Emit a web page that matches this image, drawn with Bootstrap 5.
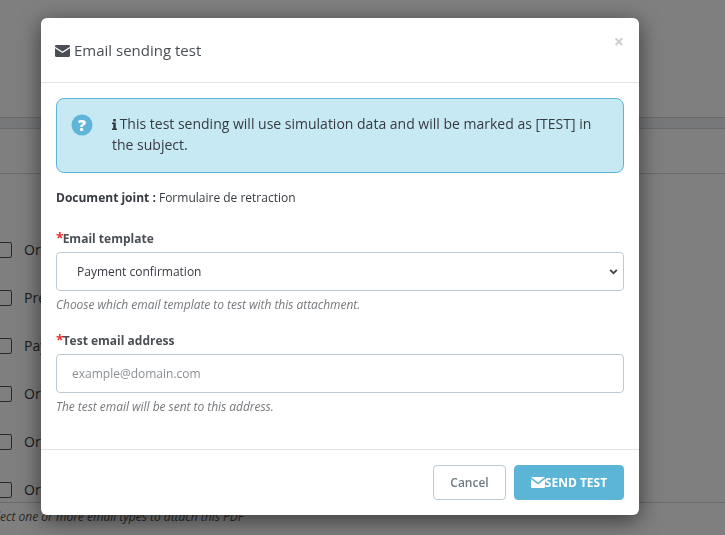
<!DOCTYPE html>
<html lang="en">
<head>
<meta charset="utf-8">
<title>Email sending test</title>
<link href="https://cdn.jsdelivr.net/npm/bootstrap@5.3.0/dist/css/bootstrap.min.css" rel="stylesheet">
<style>
html,body{height:535px;overflow:hidden}
body{font-family:"Open Sans",sans-serif;font-size:12px;color:#363a41;background:#fff}
.bg-page{height:535px;overflow:hidden;padding-top:117px}
.bg-band{height:12px;background:#ecf0f2;border-top:1px solid #d6d6d6;border-bottom:1px solid #d6d6d6}
.bg-strip{height:45px;border-bottom:1px solid #d6d6d6}
.bg-list{padding:68px 0 0 0;height:329px;border-bottom:1px solid #d6d6d6}
.bg-row{height:48px;display:flex;align-items:flex-start;gap:12px;font-size:14px;line-height:16px;margin-left:-4px;color:#363a41}
.bg-box{width:16px;height:16px;border:1px solid #555;border-radius:2px;flex:none;background:#fff}
.bg-hint{font-style:italic;font-size:12px;line-height:18px;padding-top:5px;margin-left:-15px;color:#555;white-space:nowrap}
.shade{position:fixed;inset:0;background:#000;opacity:.5;z-index:10}
.dlg{position:absolute;left:41px;top:18px;width:598px;height:497px;z-index:20;border:0;border-radius:6px;box-shadow:0 5px 22px rgba(0,0,0,.55);overflow:hidden;display:flex;flex-direction:column;background:#fff}
.dlg-head{height:65px;padding:0 14px;border-bottom:1px solid #e3e3e3;align-items:center;display:flex;position:relative;flex:none}
.dlg-title{font-size:15px;font-weight:400;color:#4a4f55;line-height:1;margin:1px 0 0;display:flex;align-items:center;gap:4px}
.dlg-x{position:absolute;right:15px;top:13px;font-size:18px;font-weight:700;color:#cdcdcd;background:none;border:0;padding:0;line-height:20px}
.dlg-body{padding:15px;flex:1;min-height:0}
.note{display:flex;background:#c7e9f3;border:1px solid #5eb5d7;border-radius:8px;height:75px;padding:14px 15px 0 14px;margin:0;color:#363a41;font-size:14px;line-height:21px}
.note-ico{width:41px;flex:none;padding-top:1px}
.note-ico svg{display:block}
.note-i{vertical-align:-1px;margin-right:-1px}
.doc{margin:16px 0 0;line-height:18px;height:18px}
.doc b{font-weight:700}
.fld-lab{font-size:12px;font-weight:700;color:#4a4f55;line-height:16px;margin:0 0 5px;display:block}
.fld-lab i{color:#e4322b;font-style:normal;font-size:14px;line-height:14px;margin-right:-1px}
.fld-a{margin-top:24px}
.fld-b{margin-top:20px}
.inp{height:39px;border:1px solid #bccbd3;border-radius:4px;font-size:12px;color:#363a41;font-family:inherit;box-shadow:none}
select.inp{padding:0 16px 0 20px;background-image:url("data:image/svg+xml,%3csvg xmlns='http://www.w3.org/2000/svg' viewBox='0 0 16 16'%3e%3cpath fill='none' stroke='%23444' stroke-width='3.2' d='M2 5l6 6 6-6'/%3e%3c/svg%3e");background-size:9px 9px;background-position:right 5px center}
input.inp{padding:0 15px}
input.inp::placeholder{color:#8a8f94;opacity:1}
.fld-help{font-style:italic;font-size:12px;color:#75797d;margin:5px 0 0;line-height:17px;letter-spacing:-.003em}
.dlg-foot{height:66px;flex:none;padding:0 15px;border-top:1px solid #e3e3e3;display:flex;justify-content:flex-end;align-items:center;gap:8px;margin:0}
.act{height:35px;border-radius:4px;font-size:12px;font-weight:600;display:flex;align-items:center;justify-content:center;padding:0;margin:0}
.act-cancel{width:73px;background:#fff;border:1px solid #bccbd3;color:#6c7a84}
.act-send{width:110px;background:#5cb5d6;border:1px solid #5cb5d6;color:#fff;font-weight:700}
</style>
</head>
<body>
<div class="bg-page">
  <div class="bg-band"></div>
  <div class="bg-strip"></div>
  <div class="bg-list">
    <div class="bg-row"><span class="bg-box"></span><span>Order</span></div>
    <div class="bg-row"><span class="bg-box"></span><span>Preparation</span></div>
    <div class="bg-row"><span class="bg-box"></span><span>Payment</span></div>
    <div class="bg-row"><span class="bg-box"></span><span>Order</span></div>
    <div class="bg-row"><span class="bg-box"></span><span>Order</span></div>
    <div class="bg-row"><span class="bg-box"></span><span>Order</span></div>
  </div>
  <div class="bg-hint">Select one or more email types to attach this PDF</div>
</div>
<div class="shade"></div>

<div class="dlg" role="dialog">
  <div class="dlg-head">
    <h5 class="dlg-title">
      <svg width="15" height="12" viewBox="0 0 14 11"><path fill="#4a4f55" d="M1 0h12a1 1 0 0 1 1 1v.6L7 6 0 1.6V1a1 1 0 0 1 1-1zM0 3l7 4.4L14 3v7a1 1 0 0 1-1 1H1a1 1 0 0 1-1-1z"/></svg>
      Email sending test</h5>
    <button type="button" class="dlg-x" aria-label="Close">×</button>
  </div>
  <div class="dlg-body">
    <div class="note">
      <div class="note-ico">
        <svg width="22" height="22" viewBox="0 0 22 22"><circle cx="11" cy="11" r="10.5" fill="#5eb5d7"/><text x="11" y="17" text-anchor="middle" font-family="Open Sans,sans-serif" font-weight="800" font-size="16" fill="#fff">?</text></svg>
      </div>
      <div><svg class="note-i" width="5" height="11" viewBox="0 0 5 11"><path fill="#363a41" d="M1.2 0h2.6v2.4H1.2zM0 3.6h3.8v5.9H5V11H0V9.500h1.200V5.100H0z"/></svg> This test sending will use simulation data and will be marked as [TEST] in the subject.</div>
    </div>
    <p class="doc"><b>Document joint :</b> Formulaire de retraction</p>
    <div class="fld-a">
      <label class="fld-lab"><i>*</i>Email template</label>
      <select class="form-select inp"><option>Payment confirmation</option></select>
      <p class="fld-help">Choose which email template to test with this attachment.</p>
    </div>
    <div class="fld-b">
      <label class="fld-lab"><i>*</i>Test email address</label>
      <input type="text" class="form-control inp" placeholder="example@domain.com">
      <p class="fld-help">The test email will be sent to this address.</p>
    </div>
  </div>
  <div class="dlg-foot">
    <button type="button" class="btn act act-cancel">Cancel</button>
    <button type="button" class="btn act act-send">
      <svg width="14" height="11" viewBox="0 0 14 11"><path fill="#fff" d="M0 0h14L7 5.5zM0 2l7 5.4L14 2v8a1 1 0 0 1-1 1H1a1 1 0 0 1-1-1z"/></svg>SEND TEST</button>
  </div>
</div>
<script src="https://cdn.jsdelivr.net/npm/bootstrap@5.3.0/dist/js/bootstrap.bundle.min.js"></script>
</body>
</html>
